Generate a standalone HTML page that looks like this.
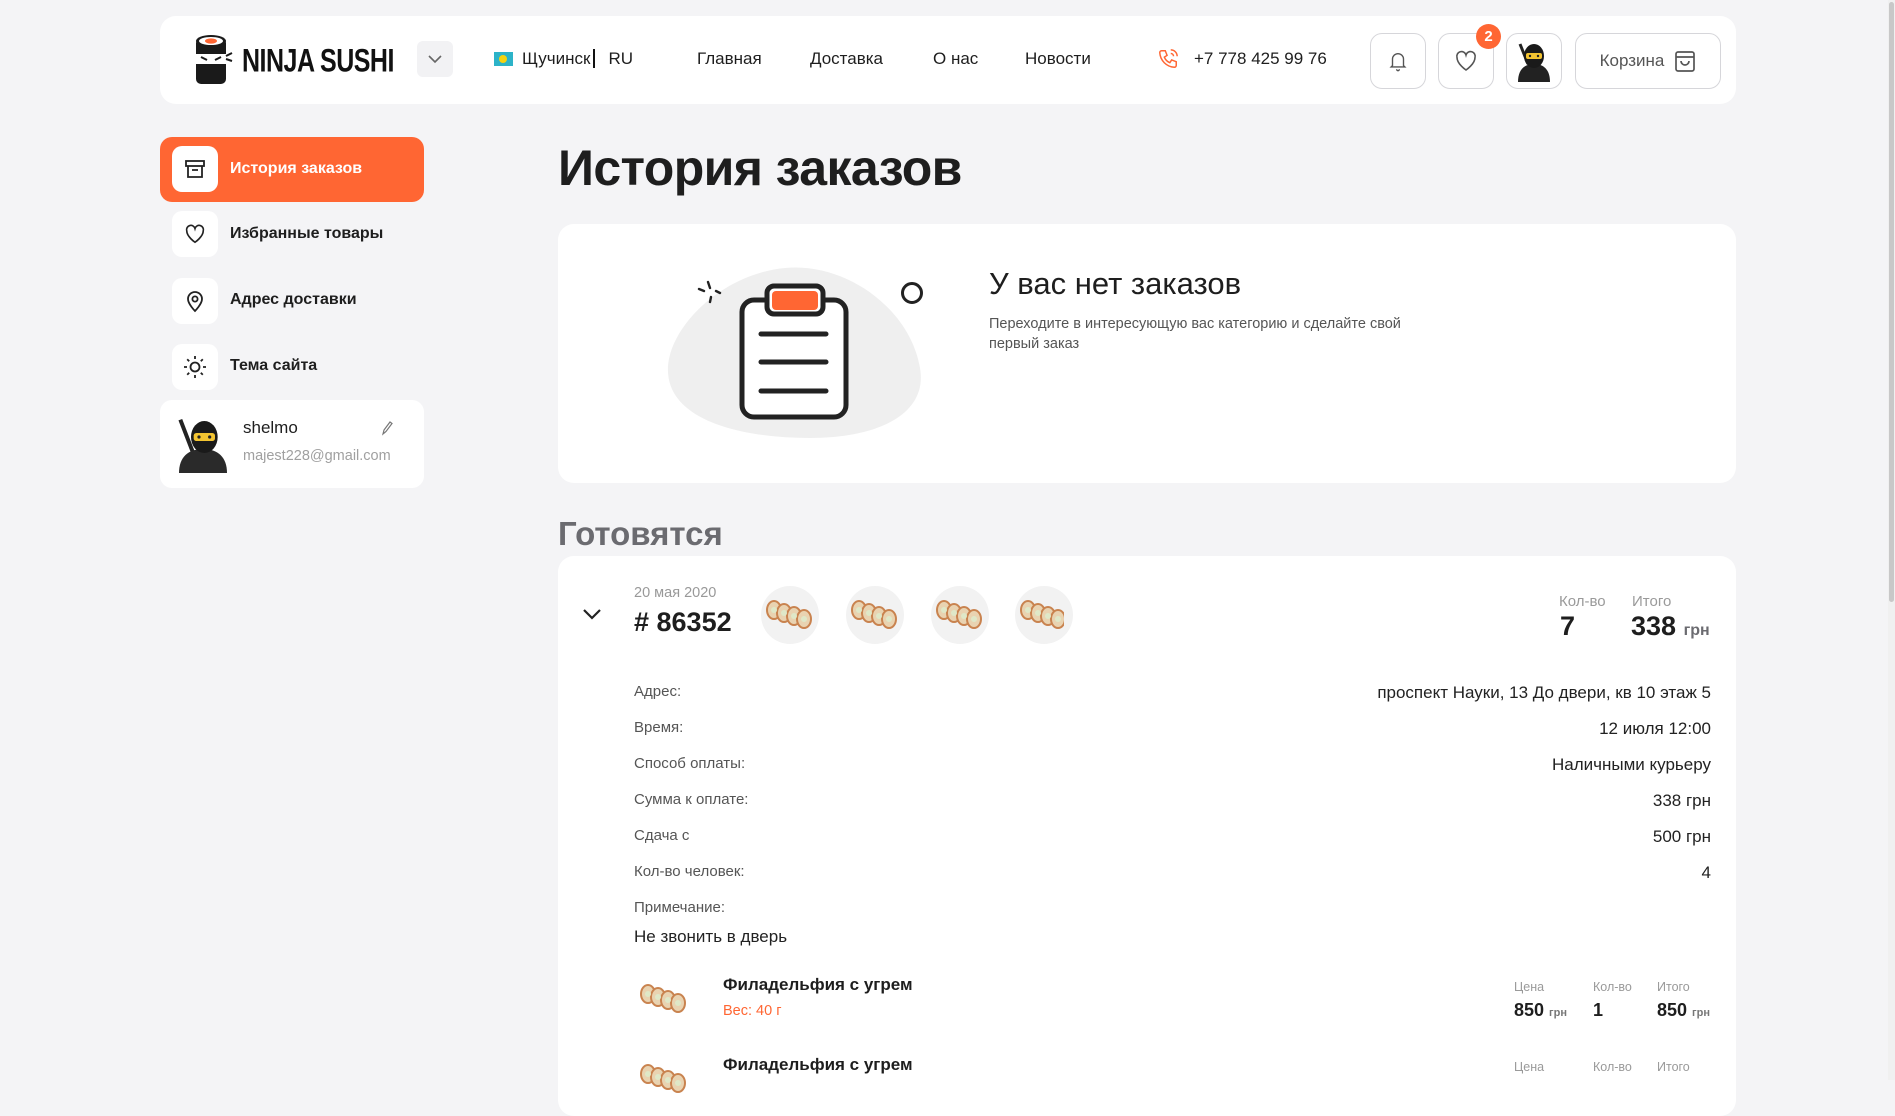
<!DOCTYPE html>
<html><head><meta charset="utf-8">
<style>
*{box-sizing:border-box;margin:0;padding:0}
body{width:1895px;height:1080px;overflow:hidden;background:#f4f4f6;font-family:"Liberation Sans",sans-serif;color:#1e1e1e;position:relative}
.a{position:absolute}
.card{background:#fff;border-radius:16px}
.nav{font-size:17px;color:#1e1e1e;top:49px}
.hb{position:absolute;top:33px;width:56px;height:56px;border:1px solid #d6d6da;border-radius:12px;background:#fff;display:flex;align-items:center;justify-content:center}
.side{position:absolute;left:172px;width:46px;height:46px;border-radius:10px;background:#fff;display:flex;align-items:center;justify-content:center}
.sl{position:absolute;left:230px;font-size:16px;font-weight:700;color:#1e1e1e}
.lbl{position:absolute;left:634px;font-size:15px;color:#555}
.val{position:absolute;right:184px;font-size:17px;color:#222;text-align:right}
.sm{font-size:12.5px;color:#9a9a9a;position:absolute}
.b17{font-size:18px;font-weight:700;position:absolute}
.grn{font-size:11px;color:#777;font-weight:700}
.sushi{position:absolute;width:58px;height:58px;border-radius:50%;background:#f2f2f2;top:586px}
</style></head><body>

<!-- header -->
<div class="a card" style="left:160px;top:16px;width:1576px;height:88px"></div>
<svg class="a" style="left:193px;top:34px" width="40" height="52" viewBox="0 0 40 52">
<rect x="3" y="4" width="30" height="46" rx="5" fill="#1a1a1a"/>
<ellipse cx="18" cy="7" rx="15" ry="6" fill="#1a1a1a"/>
<ellipse cx="18" cy="7" rx="12" ry="4" fill="#fff"/>
<ellipse cx="18" cy="7" rx="6" ry="2.6" fill="#ff6633"/>
<rect x="3" y="20" width="30" height="10" fill="#fff"/>
<path d="M8 23l6 3M28 23l-6 3" stroke="#1a1a1a" stroke-width="2"/>
<path d="M33 22l6-3M33 25l6 2" stroke="#1a1a1a" stroke-width="2"/>
</svg>
<div class="a" style="left:242px;top:43px;font-size:25px;font-weight:700;letter-spacing:-0.5px;color:#111;transform:scaleY(1.3);transform-origin:left top;white-space:nowrap">NINJA SUSHI</div>
<div class="a" style="left:417px;top:41px;width:36px;height:36px;border-radius:6px;background:#f2f2f4"></div>
<svg class="a" style="left:427px;top:54px" width="16" height="10"><path d="M2 2l6 6 6-6" stroke="#666" stroke-width="1.6" fill="none"/></svg>
<div class="a" style="left:494px;top:52px;width:19px;height:14px;background:#2cb3c8"><div style="margin:3px 5px;width:8px;height:8px;border-radius:50%;background:#f5d310"></div></div>
<div class="a nav" style="left:522px">Щучинск<span style="border-left:2px solid #111;margin:0 14px 0 2px"></span>RU</div>
<div class="a nav" style="left:697px">Главная</div>
<div class="a nav" style="left:810px">Доставка</div>
<div class="a nav" style="left:933px">О нас</div>
<div class="a nav" style="left:1025px">Новости</div>
<svg class="a" style="left:1157px;top:48px" width="22" height="22" viewBox="0 0 24 24" fill="none" stroke="#ff6633" stroke-width="1.6"><path d="M5 3h4l2 5-3 2a11 11 0 0 0 6 6l2-3 5 2v4a2 2 0 0 1-2 2A17 17 0 0 1 3 5a2 2 0 0 1 2-2z"/><path d="M15 2a7 7 0 0 1 7 7M15 6a3 3 0 0 1 3 3"/></svg>
<div class="a nav" style="left:1194px">+7 778 425 99 76</div>
<div class="hb" style="left:1370px"><svg width="22" height="24" viewBox="0 0 24 24" fill="none" stroke="#555" stroke-width="1.5"><path d="M6 17V10a6 6 0 0 1 12 0v7l1.5 1.5h-15z"/><path d="M10.5 21a1.5 1.5 0 0 0 3 0"/></svg></div>
<div class="hb" style="left:1438px"><svg width="24" height="22" viewBox="0 0 24 22" fill="none" stroke="#555" stroke-width="1.6"><path d="M12 20S3 14 3 7.5A4.5 4.5 0 0 1 12 5a4.5 4.5 0 0 1 9 2.5C21 14 12 20 12 20z"/></svg></div>
<div class="a" style="left:1476px;top:24px;width:25px;height:25px;border-radius:50%;background:#ff6633;color:#fff;font-size:15px;font-weight:700;text-align:center;line-height:25px">2</div>
<div class="hb" style="left:1506px"><svg width="40" height="42" viewBox="0 0 40 42"><path d="M6 4l8 20" stroke="#222" stroke-width="3"/><path d="M4 42c0-12 6-18 16-18s16 6 16 18z" fill="#222"/><ellipse cx="20" cy="16" rx="10" ry="12" fill="#1a1a1a"/><rect x="12" y="13" width="16" height="6" rx="2" fill="#f3c431"/><circle cx="16" cy="16" r="1.2" fill="#222"/><circle cx="24" cy="16" r="1.2" fill="#222"/></svg></div>
<div class="hb" style="left:1575px;width:146px;font-size:17px;color:#555;gap:10px">Корзина <svg width="22" height="24" viewBox="0 0 22 24" fill="none" stroke="#555" stroke-width="1.7"><rect x="2" y="3" width="18" height="19" rx="2"/><path d="M2 8h18M7 12a4 4 0 0 0 8 0"/></svg></div>

<!-- sidebar -->
<div class="a" style="left:160px;top:137px;width:264px;height:65px;background:#ff6633;border-radius:12px"></div>
<div class="side" style="top:146px"><svg width="22" height="22" viewBox="0 0 22 22" fill="none" stroke="#222" stroke-width="1.8"><rect x="2" y="3" width="18" height="5"/><path d="M4 8v11h14V8M8 12h6"/></svg></div>
<div class="sl" style="top:160px;color:#fff">История заказов</div>
<div class="side" style="top:211px"><svg width="22" height="22" viewBox="0 0 24 22" fill="none" stroke="#222" stroke-width="1.8"><path d="M12 20S3 14 3 7.5A4.5 4.5 0 0 1 12 5a4.5 4.5 0 0 1 9 2.5C21 14 12 20 12 20z"/></svg></div>
<div class="sl" style="top:225px">Избранные товары</div>
<div class="side" style="top:278px"><svg width="22" height="24" viewBox="0 0 22 24" fill="none" stroke="#222" stroke-width="1.8"><path d="M11 22s-7-7-7-12a7 7 0 0 1 14 0c0 5-7 12-7 12z"/><circle cx="11" cy="10" r="2.6"/></svg></div>
<div class="sl" style="top:291px">Адрес доставки</div>
<div class="side" style="top:344px"><svg width="24" height="24" viewBox="0 0 24 24" fill="none" stroke="#222" stroke-width="1.8"><circle cx="12" cy="12" r="4.5"/><path d="M12 1v3M12 20v3M1 12h3M20 12h3M4.2 4.2l2 2M17.8 17.8l2 2M4.2 19.8l2-2M17.8 6.2l2-2"/></svg></div>
<div class="sl" style="top:357px">Тема сайта</div>
<div class="a card" style="left:160px;top:400px;width:264px;height:88px;border-radius:12px"></div>
<svg class="a" style="left:175px;top:417px" width="56" height="56" viewBox="0 0 40 42"><path d="M3 2l10 26" stroke="#222" stroke-width="3"/><path d="M2 42c0-12 7-18 18-18s18 6 18 18z" fill="#2a2a2a"/><ellipse cx="21" cy="15" rx="10" ry="12" fill="#1a1a1a"/><rect x="13" y="12" width="16" height="6" rx="2" fill="#f3c431"/><circle cx="17" cy="15" r="1.2" fill="#222"/><circle cx="25" cy="15" r="1.2" fill="#222"/></svg>
<div class="a" style="left:243px;top:418px;font-size:17px;color:#1e1e1e">shelmo</div>
<div class="a" style="left:243px;top:448px;font-size:14.5px;color:#a0a0a0">majest228@gmail.com</div>
<svg class="a" style="left:380px;top:419px" width="14" height="18" viewBox="0 0 14 18" fill="none" stroke="#777" stroke-width="1.2"><path d="M3 15l1-4 6-8 2 1.5-6 8z"/></svg>

<!-- main -->
<div class="a" style="left:558px;top:139px;font-size:50px;font-weight:700;color:#1e1e1e;letter-spacing:-.6px">История заказов</div>
<div class="a card" style="left:558px;top:224px;width:1178px;height:259px"></div>
<svg class="a" style="left:660px;top:260px" width="280" height="185" viewBox="0 0 280 185">
<path d="M125 8c60-6 125 40 135 100 8 45-40 70-110 70C80 178 10 160 8 112 6 70 60 14 125 8z" fill="#efefef"/>
<path d="M48 22l2 6M44 31l-5-2M56 31l4 2M51 37l-1 5" stroke="#222" stroke-width="2.4" stroke-linecap="round"/>
<circle cx="252" cy="33" r="9.5" fill="none" stroke="#222" stroke-width="3"/>
<rect x="82" y="40" width="104" height="117" rx="12" fill="#fff" stroke="#222" stroke-width="5"/>
<rect x="107" y="26" width="56" height="28" rx="7" fill="#fff" stroke="#222" stroke-width="5"/>
<rect x="112" y="31" width="46" height="19" rx="4" fill="#ff6633"/>
<path d="M101 74h65M101 102h65M101 131h65" stroke="#222" stroke-width="5" stroke-linecap="round"/>
</svg>
<div class="a" style="left:989px;top:266px;font-size:31px;color:#1e1e1e">У вас нет заказов</div>
<div class="a" style="left:989px;top:314px;font-size:14.5px;color:#555;line-height:20px;width:450px">Переходите в интересующую вас категорию и сделайте свой первый заказ</div>

<div class="a" style="left:558px;top:515px;font-size:33px;font-weight:700;color:#6b6b70">Готовятся</div>
<div class="a card" style="left:558px;top:556px;width:1178px;height:560px"></div>
<svg class="a" style="left:582px;top:607px" width="20" height="14"><path d="M2 3l8 8 8-8" stroke="#222" stroke-width="2.2" fill="none"/></svg>
<div class="a" style="left:634px;top:585px;font-size:14.5px;color:#999">20 мая 2020</div>
<div class="a" style="left:634px;top:607px;font-size:27px;font-weight:700;color:#1e1e1e"># 86352</div>
<div class="sushi" style="left:761px"></div><div class="sushi" style="left:846px"></div><div class="sushi" style="left:931px"></div><div class="sushi" style="left:1015px"></div>
<svg class="a" style="left:764px;top:596px" width="300" height="40"><g id="s"><g fill="#e9d3b1" stroke="#c9834f" stroke-width="2"><ellipse cx="10" cy="14" rx="7" ry="9"/><ellipse cx="20" cy="17" rx="7" ry="9"/><ellipse cx="30" cy="20" rx="7" ry="9"/><ellipse cx="40" cy="23" rx="7" ry="9"/></g><g fill="#dfe8c8"><circle cx="10" cy="14" r="3"/><circle cx="20" cy="17" r="3"/><circle cx="30" cy="20" r="3"/><circle cx="40" cy="23" r="3"/></g></g><use href="#s" x="85"/><use href="#s" x="170"/><use href="#s" x="254"/></svg>
<div class="a" style="left:1559px;top:593px;font-size:15px;color:#9a9a9a">Кол-во</div>
<div class="a" style="left:1632px;top:593px;font-size:15px;color:#9a9a9a">Итого</div>
<div class="a" style="left:1560px;top:611px;font-size:27px;font-weight:700">7</div>
<div class="a" style="left:1631px;top:611px;font-size:27px;font-weight:700">338 <span style="font-size:16px;color:#6b6b70">грн</span></div>

<div class="lbl" style="top:683px">Адрес:</div><div class="val" style="top:683px">проспект Науки, 13 До двери, кв 10 этаж 5</div>
<div class="lbl" style="top:719px">Время:</div><div class="val" style="top:719px">12 июля 12:00</div>
<div class="lbl" style="top:755px">Способ оплаты:</div><div class="val" style="top:755px">Наличными курьеру</div>
<div class="lbl" style="top:791px">Сумма к оплате:</div><div class="val" style="top:791px">338 грн</div>
<div class="lbl" style="top:827px">Сдача с</div><div class="val" style="top:827px">500 грн</div>
<div class="lbl" style="top:863px">Кол-во человек:</div><div class="val" style="top:863px">4</div>
<div class="lbl" style="top:899px">Примечание:</div>
<div class="a" style="left:634px;top:927px;font-size:17px;color:#222">Не звонить в дверь</div>

<svg class="a" style="left:636px;top:980px" width="66" height="36"><g transform="translate(2,0)"><use href="#s"/></g></svg>
<div class="a" style="left:723px;top:975px;font-size:17px;font-weight:700">Филадельфия с угрем</div>
<div class="a" style="left:723px;top:1003px;font-size:14.5px;color:#ff6633">Вес: 40 г</div>
<div class="sm" style="left:1514px;top:980px">Цена</div><div class="sm" style="left:1593px;top:980px">Кол-во</div><div class="sm" style="left:1657px;top:980px">Итого</div>
<div class="b17" style="left:1514px;top:1000px">850 <span class="grn">грн</span></div>
<div class="b17" style="left:1593px;top:1000px">1</div>
<div class="b17" style="left:1657px;top:1000px">850 <span class="grn">грн</span></div>

<svg class="a" style="left:636px;top:1060px" width="66" height="36"><g transform="translate(2,0)"><use href="#s"/></g></svg>
<div class="a" style="left:723px;top:1055px;font-size:17px;font-weight:700">Филадельфия с угрем</div>
<div class="sm" style="left:1514px;top:1060px">Цена</div><div class="sm" style="left:1593px;top:1060px">Кол-во</div><div class="sm" style="left:1657px;top:1060px">Итого</div>

<div class="a" style="left:1888px;top:0;width:7px;height:1080px;background:#f0f0f0"></div>
<div class="a" style="left:1889px;top:2px;width:5px;height:600px;background:#c8c8c8;border-radius:3px"></div>
</body></html>
